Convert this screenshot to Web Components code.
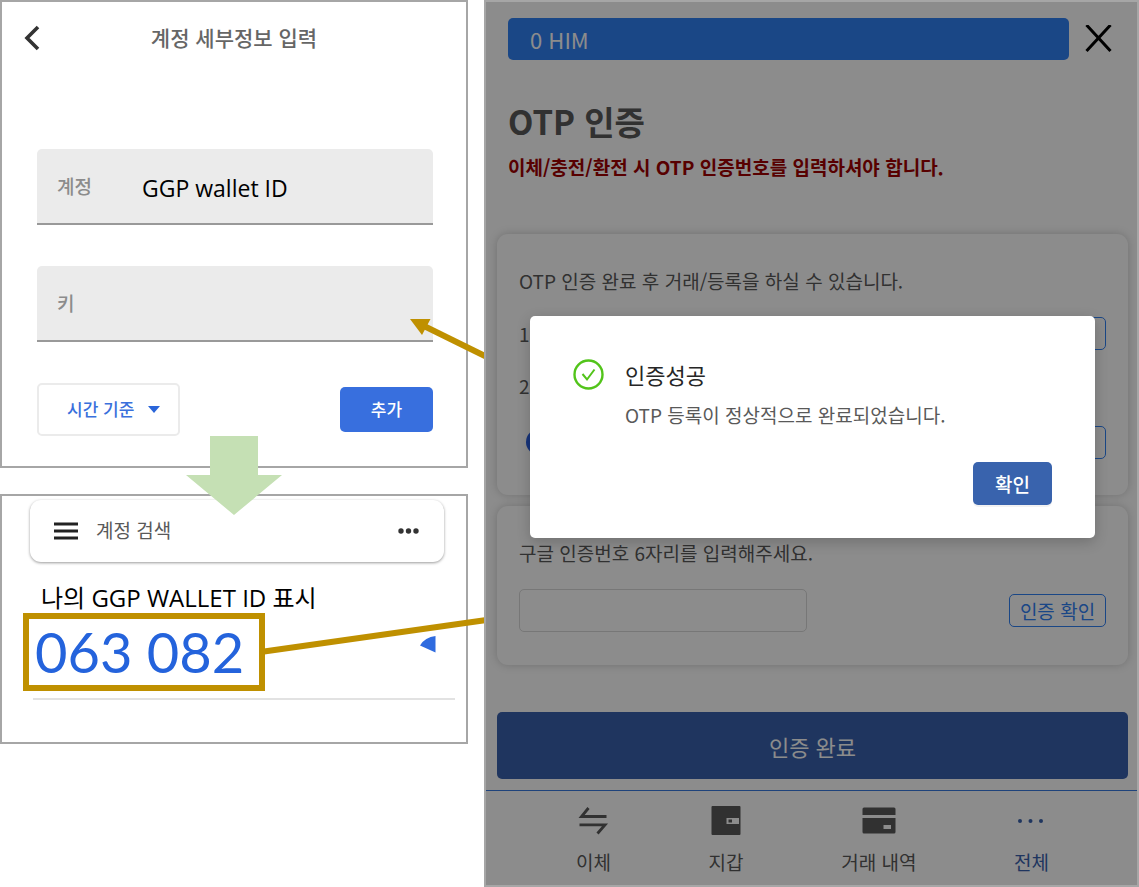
<!DOCTYPE html>
<html lang="ko">
<head>
<meta charset="utf-8">
<meta name="viewport" content="width=device-width, initial-scale=1">
<title>OTP 인증</title>
<style>
    body {
        margin: 0;
        background: #fff;
        font-family: "Noto Sans CJK KR", sans-serif;
    }
</style>
</head>
<body>
<otp-guide>
    <app-screen slot="steps">
        <account-form></account-form>
    </app-screen>
    <app-screen slot="steps">
        <search-bar>계정 검색</search-bar>
        <code-entry code="063 082">나의 GGP WALLET ID 표시</code-entry>
    </app-screen>
    <wallet-screen slot="wallet">
        <balance-bar slot="header">0 HIM</balance-bar>
        <page-title slot="header">
            OTP 인증
            <span slot="note">이체/충전/환전 시 OTP 인증번호를 입력하셔야 합니다.</span>
        </page-title>
        <otp-steps>OTP 인증 완료 후 거래/등록을 하실 수 있습니다.</otp-steps>
        <otp-verify>구글 인증번호 6자리를 입력해주세요.</otp-verify>
        <submit-button slot="footer">인증 완료</submit-button>
        <tab-bar slot="footer">
            <tab-item icon="transfer">이체</tab-item>
            <tab-item icon="wallet">지갑</tab-item>
            <tab-item icon="card">거래 내역</tab-item>
            <tab-item icon="more" active>전체</tab-item>
        </tab-bar>
        <success-modal slot="modal">
            <span slot="title">인증성공</span>
            OTP 등록이 정상적으로 완료되었습니다.
        </success-modal>
    </wallet-screen>
</otp-guide>

<script>
    class BaseElement extends HTMLElement {
        constructor() {
            super();
            this.attachShadow({ mode: 'open' });
            this.shadowRoot.innerHTML = this.render();
        }
        render() {
            return '<slot></slot>';
        }
    }

    class OtpGuideElement extends BaseElement {
        render() {
            return `
      <style>
        :host {
          display: grid;
          grid-template-columns: minmax(0, 468fr) minmax(0, 655fr);
          column-gap: 16px;
          position: relative;
          align-items: start;
        }

        .steps {
          display: grid;
          row-gap: 26px;
          position: relative;
        }

        /* annotations drawn over both screens */
        svg {
          position: absolute;
          inset: 0;
          inline-size: 100%;
          block-size: 100%;
          overflow: visible;
          pointer-events: none;
        }

        .wallet {
          position: relative;
        }
      </style>
      <div class="steps">
        <slot name="steps"></slot>
        <svg aria-hidden="true">
          <path d="M210 436h48v39h24l-48 40-48-40h24z" fill="#c5e0b4"/>
          <g stroke="#bf9000" stroke-width="6">
            <path d="M424 326 490 358.500"/>
            <path d="M264 651.500 490 619.500"/>
          </g>
          <path d="M410 319h20.500l-8.500 16z" fill="#bf9000"/>
        </svg>
      </div>
      <div class="wallet"><slot name="wallet"></slot></div>
    `;
        }
    }

    class AppScreenElement extends BaseElement {
        render() {
            return `
      <style>
        :host {
          display: block;
          border: 2px solid #a6a6a6;
          background: #fff;
        }
      </style>
      <slot></slot>
    `;
        }
    }

    class AccountFormElement extends BaseElement {
        render() {
            return `
      <style>
        :host {
          display: block;
        }

        header {
          display: grid;
          grid-template-columns: 64px 1fr 64px;
          align-items: center;
          block-size: 70px;
        }

        h2 {
          margin: 0;
          font-size: 21px;
          font-weight: 500;
          text-align: center;
          color: #666;
        }

        button, select, input {
          font: inherit;
          border: none;
          appearance: none;
          background: none;
          padding: 0;
        }

        .back {
          display: flex;
          padding-block-start: 2px;
          padding-inline-start: 20px;
        }

        form {
          display: grid;
          row-gap: 41px;
          padding: 77px 33px 30px 35px;
        }

        .field {
          display: grid;
          grid-template-columns: 85px 1fr;
          align-items: center;
          block-size: 74px;
          padding-inline: 20px;
          border-block-end: 2px solid #999;
          border-radius: 5px 5px 0 0;
          background: #ebebeb;
        }

        .field label {
          padding-block-end: 2px;
          font-size: 19px;
          font-weight: 500;
          color: #8c8c8c;
        }

        .field input {
          min-inline-size: 0;
          padding-block-start: 3px;
          font-family: "Open Sans", "Noto Sans CJK KR", sans-serif;
          font-size: 23px;
          color: #000;
        }

        .actions {
          display: flex;
          justify-content: space-between;
          align-items: center;
        }

        .type {
          display: grid;
          align-items: center;
        }

        .type select, .type svg {
          grid-area: 1 / 1;
        }

        .type select {
          box-sizing: border-box;
          block-size: 53px;
          inline-size: 143px;
          padding: 0 0 2px 28px;
          border: 2px solid #ebebeb;
          border-radius: 5px;
          font-size: 17px;
          font-weight: 500;
          color: #3a70dc;
        }

        .type svg {
          justify-self: end;
          margin-inline-end: 20px;
          pointer-events: none;
        }

        .add {
          block-size: 45px;
          inline-size: 93px;
          padding-block-end: 2px;
          border-radius: 5px;
          background: #386fde;
          font-size: 17px;
          font-weight: 500;
          color: #fff;
        }
      </style>
      <header>
        <button class="back" aria-label="뒤로">
          <svg width="20" height="26" viewBox="0 0 20 26" fill="none" stroke="#333" stroke-width="3.600">
            <path d="M16 2 5 13l11 11"/>
          </svg>
        </button>
        <h2>계정 세부정보 입력</h2>
      </header>
      <form>
        <div class="field">
          <label for="account">계정</label>
          <input id="account" value="GGP wallet ID">
        </div>
        <div class="field">
          <label for="key">키</label>
          <input id="key">
        </div>
        <div class="actions">
          <div class="type">
            <select aria-label="키 유형">
              <option>시간 기준</option>
            </select>
            <svg width="12" height="7" viewBox="0 0 12 7"><path d="M0 0h12L6 7z" fill="#2a65d9"/></svg>
          </div>
          <button class="add" type="button">추가</button>
        </div>
      </form>
    `;
        }
    }

    class SearchBarElement extends BaseElement {
        render() {
            return `
      <style>
        :host {
          display: flex;
          align-items: center;
          gap: 18px;
          block-size: 61px;
          margin: 4px 22px 0 28px;
          padding: 0 23px 1px 24px;
          border-radius: 11px;
          background: #fff;
          box-shadow: 0 1px 3px rgba(0, 0, 0, 0.4);
        }

        button {
          display: flex;
          padding: 0;
          border: none;
          background: none;
        }

        span {
          flex: 1;
          padding-block-end: 2px;
          font-size: 19px;
          color: #595959;
        }
      </style>
      <button aria-label="메뉴">
        <svg width="24" height="18" viewBox="0 0 24 18" stroke="#222" stroke-width="3">
          <path d="M0 2h24M0 9h24M0 16h24"/>
        </svg>
      </button>
      <span><slot></slot></span>
      <button aria-label="더보기">
        <svg width="24" height="6" viewBox="0 0 24 6" fill="#333">
          <circle cx="4" cy="3" r="2.700"/><circle cx="11.500" cy="3" r="2.700"/><circle cx="19" cy="3" r="2.700"/>
        </svg>
      </button>
    `;
        }
    }

    class CodeEntryElement extends BaseElement {
        render() {
            return `
      <style>
        :host {
          display: block;
          padding: 21px 11px 42px 21px;
        }

        .name {
          margin: 0;
          padding-inline-start: 18px;
          font-family: "Open Sans", "Noto Sans CJK KR", sans-serif;
          font-size: 24px;
          line-height: 30px;
          color: #000;
        }

        .row {
          display: flex;
          justify-content: space-between;
          align-items: center;
        }

        output {
          border: 6px solid #bf9000;
          padding-inline: 6px 15px;
          font-family: Lato, sans-serif;
          font-size: 56px;
          line-height: 66px;
          color: #2463dc;
        }

        .timer {
          margin: 0 19px 16px 0;
        }

        hr {
          margin: 7px 0 0 10px;
          border: none;
          border-block-start: 2px solid #e2e2e2;
        }
      </style>
      <p class="name"><slot></slot></p>
      <div class="row">
        <output>${this.getAttribute('code')}</output>
        <svg class="timer" width="16" height="17" viewBox="0 0 16 17" aria-hidden="true">
          <path d="M0 9.500Q5 1 15.500 0v16.500z" fill="#2f6bdf"/>
        </svg>
      </div>
      <hr>
    `;
        }
    }

    class WalletScreenElement extends BaseElement {
        render() {
            return `
      <style>
        :host {
          display: flex;
          flex-direction: column;
          box-sizing: border-box;
          position: relative;
          min-block-size: 100vh;
          border: 2px solid #a6a6a6;
          background: #fff;
          color: #595959;
        }

        .cards {
          display: grid;
          row-gap: 11px;
          padding-inline: 11px 9px;
        }
      </style>
      <slot name="header"></slot>
      <div class="cards"><slot></slot></div>
      <slot name="footer"></slot>
      <slot name="modal"></slot>
    `;
        }
    }

    class BalanceBarElement extends BaseElement {
        render() {
            return `
      <style>
        :host {
          display: flex;
          align-items: center;
          gap: 16px;
          padding: 16px 25px 0 22px;
        }

        .balance {
          flex: 1;
          padding-inline-start: 22px;
          border-radius: 5px;
          background: #3181f5;
          font-size: 22px;
          line-height: 42px;
          color: #fff;
        }

        button {
          display: flex;
          padding: 0;
          border: none;
          background: none;
        }
      </style>
      <div class="balance"><slot></slot></div>
      <button aria-label="닫기">
        <svg width="27" height="28" viewBox="0 0 27 28" stroke="#000" stroke-width="3">
          <path d="M1.500 0 25.500 26M25.500 0 1.500 26"/>
        </svg>
      </button>
    `;
        }
    }

    class PageTitleElement extends BaseElement {
        render() {
            return `
      <style>
        :host {
          display: block;
          padding: 37px 22px 53px;
        }

        h1 {
          margin: 0 0 8px;
          font-size: 33px;
          font-weight: 700;
          line-height: 48px;
        }

        p {
          margin: 0;
          font-size: 19px;
          font-weight: 700;
          line-height: 28px;
          color: #a00000;
        }
      </style>
      <h1><slot></slot></h1>
      <p><slot name="note"></slot></p>
    `;
        }
    }

    const cardStyle = `
        :host {
          display: grid;
          row-gap: 22px;
          padding: 33px 22px;
          border-radius: 11px;
          background: #fff;
          box-shadow: 0 0 10px rgba(0, 0, 0, 0.2);
          font-size: 19px;
          line-height: 28px;
        }

        p {
          margin: 0;
        }

        .row {
          display: flex;
          align-items: center;
          justify-content: space-between;
        }

        button {
          box-sizing: border-box;
          block-size: 33px;
          min-inline-size: 97px;
          padding: 0;
          border: 1px solid #3181f5;
          border-radius: 5px;
          background: none;
          font: inherit;
          line-height: 28px;
          color: #3181f5;
        }
    `;

    class OtpStepsElement extends BaseElement {
        render() {
            return `
      <style>
        ${cardStyle}

        .tall {
          block-size: 40px;
        }

        .dot {
          block-size: 26px;
          inline-size: 26px;
          margin-inline-start: 7px;
          border-radius: 50%;
          background: #2a5fe0;
        }
      </style>
      <p><slot></slot></p>
      <div class="row">
        <span>1</span>
        <button aria-label="앱 설치"></button>
      </div>
      <div class="row">
        <span>2</span>
      </div>
      <div class="row tall">
        <span class="dot"></span>
        <button aria-label="키 복사"></button>
      </div>
    `;
        }
    }

    class OtpVerifyElement extends BaseElement {
        render() {
            return `
      <style>
        ${cardStyle}

        input {
          box-sizing: border-box;
          block-size: 43px;
          inline-size: 49%;
          padding-inline: 11px;
          border: 1px solid #d9d9d9;
          border-radius: 5px;
          background: none;
          font: inherit;
        }
      </style>
      <label for="code"><slot></slot></label>
      <div class="row">
        <input id="code" inputmode="numeric" maxlength="6">
        <button>인증 확인</button>
      </div>
    `;
        }
    }

    class SubmitButtonElement extends BaseElement {
        render() {
            return `
      <style>
        :host {
          display: block;
          padding: 47px 9px 11px 11px;
        }

        button {
          display: block;
          inline-size: 100%;
          block-size: 67px;
          border: none;
          border-radius: 5px;
          background: #3a62ad;
          font: inherit;
          font-size: 22px;
          color: #fff;
        }
      </style>
      <button><slot></slot></button>
    `;
        }
    }

    class TabBarElement extends BaseElement {
        render() {
            return `
      <style>
        :host {
          display: block;
          border-block-start: 1px solid #3a7be0;
        }

        nav {
          display: flex;
          justify-content: space-between;
          padding: 11px 88px 9px 90px;
        }
      </style>
      <nav><slot></slot></nav>
    `;
        }
    }

    const tabIcons = {
        transfer: `<path d="M12.500 6 5.500 14.500H30.500M3.500 22.800H29L21.500 31.500" fill="none" stroke="currentColor" stroke-width="2.800"/>`,
        wallet: `<path fill-rule="evenodd" fill="currentColor" d="M3.500 4h27a1 1 0 0 1 1 1v27a1 1 0 0 1-1 1h-27a1 1 0 0 1-1-1V5a1 1 0 0 1 1-1zM17.500 16v6H30v-6z"/><path d="M19.500 17.500h3.500v3h-3.500z" fill="currentColor"/>`,
        card: `<path fill-rule="evenodd" fill="currentColor" d="M2 5.500h30a1.500 1.500 0 0 1 1.500 1.500v6H.500V7A1.500 1.500 0 0 1 2 5.500zM.500 16h33v14a1.500 1.500 0 0 1-1.500 1.500H2A1.500 1.500 0 0 1 .500 30zM21.500 23v4h7.500v-4z"/>`,
        more: `<g fill="currentColor"><circle cx="5" cy="19" r="2"/><circle cx="15.500" cy="19" r="2"/><circle cx="26" cy="19" r="2"/></g>`,
    };

    class TabItemElement extends BaseElement {
        render() {
            return `
      <style>
        :host {
          display: block;
          font-size: 19px;
          line-height: 28px;
          color: #595959;
        }

        :host([active]) {
          color: #3a62ad;
        }

        a {
          display: flex;
          flex-direction: column;
          align-items: center;
          gap: 10px;
          color: inherit;
          text-decoration: none;
        }
      </style>
      <a href="#">
        <svg width="34" height="36" viewBox="0 0 34 36" aria-hidden="true">${tabIcons[this.getAttribute('icon')]}</svg>
        <slot></slot>
      </a>
    `;
        }
    }

    class SuccessModalElement extends BaseElement {
        render() {
            return `
      <style>
        :host {
          display: block;
          position: absolute;
          inset: 0;
          padding: 314px 42px 0 44px;
          background: rgba(0, 0, 0, 0.45);
        }

        section {
          display: grid;
          grid-template-columns: auto 1fr;
          column-gap: 21px;
          padding: 42px 43px 33px;
          border-radius: 5px;
          background: #fff;
          box-shadow: 0 4px 14px rgba(0, 0, 0, 0.2);
        }

        h2 {
          margin: 0 0 10px;
          font-size: 22px;
          font-weight: 400;
          line-height: 33px;
          color: #262626;
        }

        svg {
          margin-block-start: 1px;
        }

        p {
          margin: 0 0 33px;
          font-size: 19px;
          line-height: 28px;
          color: #595959;
        }

        button {
          grid-column: 2;
          justify-self: end;
          block-size: 43px;
          inline-size: 79px;
          padding: 0;
          border: none;
          border-radius: 5px;
          background: #3963ad;
          box-shadow: 0 2px 0 rgba(0, 0, 0, 0.05);
          font: inherit;
          font-size: 19px;
          font-weight: 500;
          color: #fff;
        }
      </style>
      <section role="dialog" aria-labelledby="title">
        <svg width="31" height="31" viewBox="0 0 31 31" fill="none" stroke="#52c41a" aria-hidden="true">
          <circle cx="15.500" cy="15.500" r="14" stroke-width="2.400"/>
          <path d="M9.500 15 14 20.500 21.500 10.500" stroke-width="2"/>
        </svg>
        <div>
          <h2 id="title"><slot name="title"></slot></h2>
          <p><slot></slot></p>
        </div>
        <button>확인</button>
      </section>
    `;
        }
    }

    customElements.define('otp-guide', OtpGuideElement);
    customElements.define('app-screen', AppScreenElement);
    customElements.define('account-form', AccountFormElement);
    customElements.define('search-bar', SearchBarElement);
    customElements.define('code-entry', CodeEntryElement);
    customElements.define('wallet-screen', WalletScreenElement);
    customElements.define('balance-bar', BalanceBarElement);
    customElements.define('page-title', PageTitleElement);
    customElements.define('otp-steps', OtpStepsElement);
    customElements.define('otp-verify', OtpVerifyElement);
    customElements.define('submit-button', SubmitButtonElement);
    customElements.define('tab-bar', TabBarElement);
    customElements.define('tab-item', TabItemElement);
    customElements.define('success-modal', SuccessModalElement);
</script>
</body>
</html>
